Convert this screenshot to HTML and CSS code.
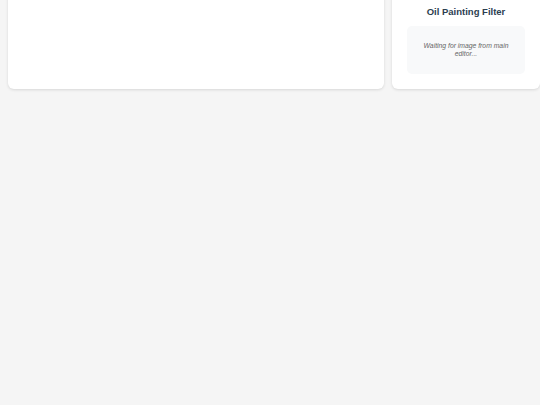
FILE: index.html
```html
<!DOCTYPE html>
<html lang="en">
<head>
    <meta charset="UTF-8">
    <meta name="viewport" content="width=device-width, initial-scale=1.0">
    <title>Oil Painting Filter</title>
    <link rel="stylesheet" href="styles.css">
</head>
<body>
    <div class="layout">
        <!-- Main editor area -->
        <div class="card editor-card"></div>

        <!-- Filter panel -->
        <div class="card filter-panel">
            <h2 class="panel-title">Oil Painting Filter</h2>
            <div class="placeholder">Waiting for image from main editor...</div>
        </div>
    </div>
</body>
</html>
```

FILE: styles.css
```css
body {
    font-family: "Liberation Sans", Arial, Helvetica, sans-serif;
    background: #f5f5f5;
    margin: 0;
    height: 100vh;
    overflow: hidden;
}
.layout {
    display: flex;
    gap: 8px;
    padding-left: 8px;
    margin-top: -10px;
}
.card {
    background: #fff;
    border-radius: 6px;
    box-shadow: 0 1px 3px rgba(0, 0, 0, 0.12);
    box-sizing: border-box;
    height: 99px;
}
.editor-card {
    width: 376px;
    flex-shrink: 0;
}
.filter-panel {
    width: 148px;
    flex-shrink: 0;
    padding: 16px 15px 15px;
    text-align: center;
}
.panel-title {
    font-size: 9.5px;
    font-weight: bold;
    color: #2c3e50;
    margin: 0 0 9px;
    line-height: 11px;
}
.placeholder {
    background: #f8f9fa;
    border-radius: 5px;
    height: 48px;
    box-sizing: border-box;
    padding: 16px 12px;
    font-size: 6.8px;
    font-style: italic;
    line-height: 7.5px;
    color: #666;
}
```
